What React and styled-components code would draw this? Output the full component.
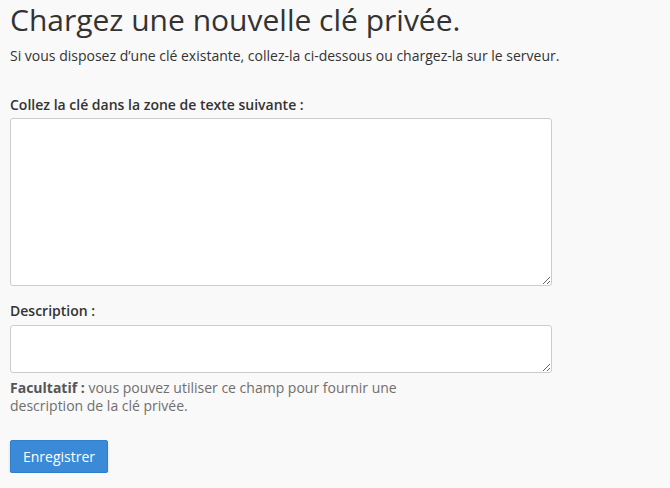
import React from 'react'
import styled, { createGlobalStyle } from 'styled-components'

const GlobalStyle = createGlobalStyle`
    html, body {
        margin: 0;
        padding: 0;
        background: #f9f9f9;
        font-family: "Open Sans", "Liberation Sans", sans-serif;
        color: #333333;
    }
`

const Page = styled.div`
    padding: 0 10px;
    box-sizing: border-box;
    width: 670px;
`

const Heading = styled.h1`
    margin: 0;
    font-size: 30px;
    font-weight: 400;
    line-height: 40px;
    color: #333333;
`

const Lead = styled.p`
    margin: 6px 0 0;
    font-size: 14px;
    line-height: 20px;
`

const Field = styled.div`
    display: flex;
    flex-direction: column;
    margin-top: ${({ gap }) => gap}px;
    width: 542px;
`

const Label = styled.label`
    font-size: 14px;
    font-weight: 600;
    line-height: 20px;
    margin-bottom: ${({ space }) => space}px;
`

const TextArea = styled.textarea`
    box-sizing: border-box;
    display: block;
    width: 542px;
    height: ${({ h }) => h}px;
    margin: 0;
    border: 1px solid #cccccc;
    border-radius: 3px;
    background: #ffffff;
    resize: vertical;
    font-family: inherit;
    font-size: 14px;
    padding: 6px 10px;
`

const Help = styled.p`
    margin: 6px 0 0;
    width: 400px;
    font-size: 14px;
    line-height: 18px;
    color: #6f6f6f;

    strong {
        font-weight: 700;
        color: #555555;
    }
`

const Button = styled.button`
    display: block;
    margin-top: 25px;
    height: 33px;
    padding: 0 12px;
    border: 1px solid #2f7fcc;
    border-radius: 2px;
    background: #3a8ad8;
    color: #ffffff;
    font-family: inherit;
    font-size: 14px;
    box-shadow: 0 2px 3px rgba(0, 0, 0, 0.15);
`

export default function App() {
    return (
        <Page>
            <GlobalStyle />
            <Heading>Chargez une nouvelle clé privée.</Heading>
            <Lead>
                Si vous disposez d’une clé existante, collez-la ci-dessous ou
                chargez-la sur le serveur.
            </Lead>
            <Field gap={29}>
                <Label space={3}>
                    Collez la clé dans la zone de texte suivante :
                </Label>
                <TextArea h={168} />
            </Field>
            <Field gap={15}>
                <Label space={4}>Description :</Label>
                <TextArea h={48} />
            </Field>
            <Help>
                <strong>Facultatif :</strong> vous pouvez utiliser ce champ
                pour fournir une description de la clé privée.
            </Help>
            <Button>Enregistrer</Button>
        </Page>
    )
}
